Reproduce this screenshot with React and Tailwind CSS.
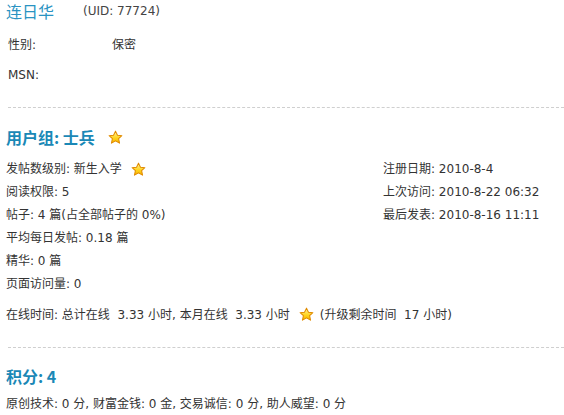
import React from "react";

const Star = ({ className = "" }) => (
  <svg width="15" height="15" viewBox="0 0 16 16" className={className}>
    <defs>
      <linearGradient id="sg" x1="0" y1="0" x2="0" y2="1">
        <stop offset="0" stopColor="#fff7a0" />
        <stop offset="0.6" stopColor="#ffd21a" />
        <stop offset="1" stopColor="#f5b400" />
      </linearGradient>
    </defs>
    <path
      d="M8 1.2 L10.1 5.6 L14.8 6.1 L11.3 9.3 L12.3 14 L8 11.6 L3.7 14 L4.7 9.3 L1.2 6.1 L5.9 5.6 Z"
      fill="url(#sg)"
      stroke="#e08a00"
      strokeWidth="1.1"
      strokeLinejoin="round"
    />
  </svg>
);

const font = { fontFamily: '"DejaVu Sans", "Noto Sans CJK SC", sans-serif' };

export default function App() {
  return (
    <div className="w-[564px] h-[415px] bg-white text-[#333] text-[12px] overflow-hidden pl-[6px]" style={font}>
      <div className="h-[22px] flex items-center">
        <span className="text-[16px] text-[#2a93c2] w-[77px]" style={{ fontFamily: '"Noto Sans CJK SC", sans-serif' }}>连日华</span>
        <span className="text-[12px] text-[#444]">(UID: 77724)</span>
      </div>
      <div className="mt-[8px] h-[30px] flex items-center pl-[2px]">
        <span className="w-[104px]">性别:</span>
        <span>保密</span>
      </div>
      <div className="h-[30px] flex items-center pl-[2px]">MSN:</div>
      <div className="mt-[17px] ml-[2px] border-t border-dashed border-[#cfcfcf]" />

      <div className="pt-[18px] h-[40px] flex items-end">
        <div className="h-[22px] flex items-center">
          <span className="text-[16px] font-bold text-[#1a88b6]" style={{ fontFamily: '"Noto Sans CJK SC", sans-serif' }}>用户组: 士兵</span>
          <Star className="ml-[13px]" />
        </div>
      </div>

      <div className="mt-[10px] grid grid-cols-[377px_1fr] leading-[23px]">
        <div>
          <div className="flex items-center h-[23px]">发帖数级别: 新生入学<Star className="ml-[9px]" /></div>
          <div>阅读权限: 5</div>
          <div>帖子: 4 篇(占全部帖子的 0%)</div>
          <div>平均每日发帖: 0.18 篇</div>
          <div>精华: 0 篇</div>
          <div>页面访问量: 0</div>
        </div>
        <div>
          <div>注册日期: 2010-8-4</div>
          <div>上次访问: 2010-8-22 06:32</div>
          <div>最后发表: 2010-8-16 11:11</div>
        </div>
      </div>
      <div className="mt-[7px] h-[23px] flex items-center whitespace-pre">
        在线时间: 总计在线  3.33 小时, 本月在线  3.33 小时<Star className="ml-[9px] mr-[6px]" />(升级剩余时间  17 小时)
      </div>
      <div className="mt-[21px] ml-[2px] border-t border-dashed border-[#cfcfcf]" />
      <div className="pt-[17px] h-[39px] flex items-end">
        <div className="h-[22px] flex items-center">
          <span className="text-[16px] font-bold text-[#1a88b6]" style={{ fontFamily: '"Noto Sans CJK SC", sans-serif' }}>积分: 4</span>
        </div>
      </div>
      <div className="mt-[5px] h-[23px] flex items-center">原创技术: 0 分, 财富金钱: 0 金, 交易诚信: 0 分, 助人威望: 0 分</div>
    </div>
  );
}
